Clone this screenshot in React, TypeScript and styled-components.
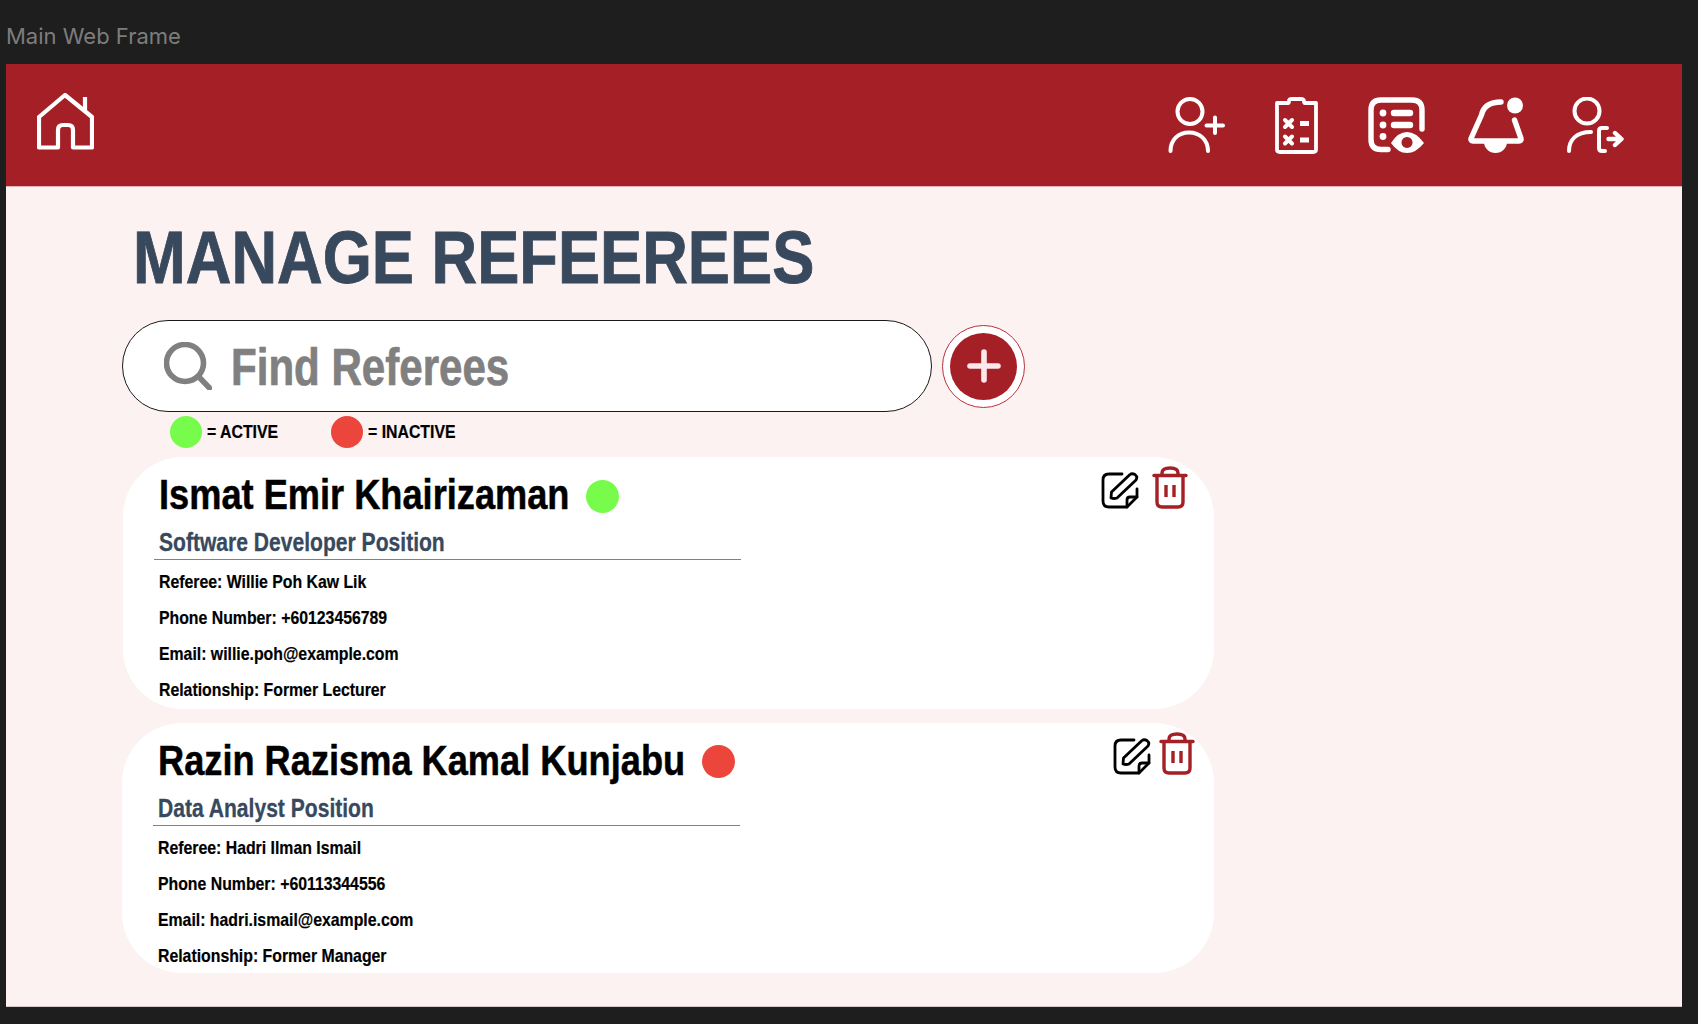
import React from "react";
import styled, { createGlobalStyle, css } from "styled-components";

const Global = createGlobalStyle`
  * { box-sizing: border-box; }
  html, body { margin: 0; padding: 0; background: #1e1e1e; }
  body { font-family: "Liberation Sans", Arial, sans-serif; }
`;

const narrow = (ratio: number, stroke = 0) => css`
  display: block;
  transform: scaleX(${ratio});
  transform-origin: 0 50%;
  white-space: nowrap;
  -webkit-text-stroke: ${stroke}px currentColor;
`;

const Page = styled.div`
  width: 1698px;
  height: 1024px;
  overflow: hidden;
  background: #1e1e1e;
`;
const FrameLabel = styled.div`
  height: 64px;
  padding: 23px 0 0 6px;
  font: 400 22px/26px Inter, sans-serif;
  color: #7d7d7d;
`;
const Frame = styled.div`
  width: 1676px;
  height: 943px;
  margin-left: 6px;
  background: #fdf2f2;
  border-bottom: 1px solid #d8c8c8;
`;
const Header = styled.header`
  height: 123px;
  background: #a52026;
  border-bottom: 1px solid #e3b4b6;
  display: flex;
  align-items: flex-start;
  justify-content: space-between;
  padding: 29px 58px 0 31px;
`;
const Nav = styled.nav`
  display: flex;
  padding-top: 4px;
`;
const NavSlot = styled.span<{ $left: number }>`
  display: block;
  height: 57px;
  margin-left: ${(p) => p.$left}px;
`;
const Main = styled.main`
  padding-left: 116px;
  width: 1210px;
`;
const Title = styled.h1`
  margin: 0;
  height: 133px;
  padding: 28px 0 0 13px;
  font-weight: 700;
  font-size: 74px;
  line-height: 86px;
  color: #38495d;
  ${narrow(0.854, 0.9)}
`;
const SearchRow = styled.div`
  display: flex;
  align-items: center;
  gap: 10px;
`;
const Search = styled.div`
  width: 810px;
  height: 92px;
  background: #fff;
  border: 1px solid #1a1a1a;
  border-radius: 46px;
  display: flex;
  align-items: center;
  gap: 19px;
  padding-left: 41px;
`;
const Placeholder = styled.span`
  padding-top: 3px;
  font-weight: 700;
  font-size: 51px;
  color: #808080;
  ${narrow(0.825, 0.7)}
`;
const AddButton = styled.button`
  width: 83px;
  height: 83px;
  padding: 0;
  border-radius: 50%;
  background: #fff;
  border: 1px solid #b9303c;
  display: flex;
  align-items: center;
  justify-content: center;
`;
const AddInner = styled.span`
  width: 67px;
  height: 67px;
  border-radius: 50%;
  background: #a52026;
  display: flex;
  align-items: center;
  justify-content: center;
`;
const Legend = styled.div`
  display: flex;
  align-items: center;
  height: 45px;
  padding: 0 0 5px 48px;
`;
const LegendItem = styled.div<{ $width: number }>`
  display: flex;
  align-items: center;
  gap: 5px;
  width: ${(p) => p.$width}px;
`;
const LegendText = styled.span`
  font-weight: 700;
  font-size: 18px;
  color: #000;
  ${narrow(0.88, 0.2)}
`;
const Dot = styled.span<{ $on: boolean; $size?: number; $drop?: number }>`
  flex: none;
  display: inline-block;
  width: ${(p) => p.$size ?? 32}px;
  height: ${(p) => p.$size ?? 32}px;
  margin-top: ${(p) => p.$drop ?? 0}px;
  border-radius: 50%;
  background: ${(p) => (p.$on ? "#78fc4c" : "#ec463c")};
`;
const CardList = styled.div`
  display: flex;
  flex-direction: column;
  gap: 14px;
`;
const Card = styled.article<{ $height: number; $inset: number }>`
  width: ${(p) => 1092 - p.$inset}px;
  height: ${(p) => p.$height}px;
  margin-left: ${(p) => p.$inset}px;
  background: #fff;
  border-radius: 60px;
  display: flex;
  justify-content: space-between;
  padding-left: 36px;
`;
const CardBody = styled.div`
  width: 582px;
  padding-top: 13px;
`;
const NameRow = styled.div`
  display: flex;
  align-items: center;
  gap: 17px;
  height: 48px;
`;
const Name = styled.h2<{ $width: number }>`
  margin: 0;
  width: ${(p) => p.$width}px;
  font-weight: 700;
  font-size: 43px;
  line-height: 48px;
  color: #000;
  ${narrow(0.842, 0.5)}
`;
const Position = styled.div`
  margin-left: -5px;
  padding: 10px 0 3px 5px;
  height: 42px;
  border-bottom: 1px solid #c9616f;
`;
const PositionText = styled.h3`
  margin: 0;
  font-weight: 700;
  font-size: 25px;
  line-height: 28px;
  color: #38495d;
  ${narrow(0.843, 0.3)}
`;
const Details = styled.div`
  padding-top: 4px;
`;
const Detail = styled.p`
  margin: 0;
  height: 36px;
  font-weight: 700;
  font-size: 18.5px;
  line-height: 36px;
  color: #000;
  ${narrow(0.855, 0.2)}
`;
const Actions = styled.div<{ $gap: number; $right: number }>`
  display: flex;
  align-items: flex-end;
  align-self: flex-start;
  gap: ${(p) => p.$gap}px;
  padding: 9px ${(p) => p.$right}px 0 0;
`;

const w = { fill: "none", stroke: "#fff", strokeLinecap: "round", strokeLinejoin: "round" } as const;

const HomeIcon = () => (
  <svg width="57" height="57" viewBox="0 0 57 57" {...w} strokeWidth="4.2" strokeLinecap="butt" strokeLinejoin="miter">
    <path d="M2 54.500H21V37q0-5 5-5h5q5 0 5 5V54.500H55V24L28 2 2 24Z" strokeLinejoin="round" />
    <path d="M48 4V18" />
  </svg>
);
const UserPlusIcon = () => (
  <svg width="57" height="57" viewBox="0 0 57 57" {...w} strokeWidth="4">
    <circle cx="22" cy="14.500" r="12.500" />
    <path d="M2.500 54C2.500 43 10 35.500 21 35.500S40 43 40 54" />
    <path d="M47 20.500V36M38.500 28.500H55" />
  </svg>
);
const ClipboardIcon = () => (
  <svg width="43" height="57" viewBox="0 0 43 57" {...w} strokeWidth="3.800">
    <path d="M13 6H2v46.500q0 2.500 3 2.500h33q3 0 3-2.500V6H30q-1 0-1-2 0-2-3-2H17Q14 2 14 4q0 2-1 2Z" />
    <path d="M10 23l7 7M17 23l-7 7M10 39.500l7 7M17 39.500l-7 7" strokeWidth="4" />
    <path d="M25 26.500h9M25 43h9" strokeWidth="5" strokeLinecap="butt" />
  </svg>
);
const ListEyeIcon = () => (
  <svg width="57" height="57" viewBox="0 0 57 57">
    <g fill="none" stroke="#fff" strokeWidth="5.400" strokeLinecap="round">
      <path d="M20 52.500H13Q3 52.500 3 42.500V13Q3 3 13 3H44Q54 3 54 13V32" />
      <path d="M26 16H42M26 28H42" strokeWidth="6.400" />
    </g>
    <g fill="#fff">
      <circle cx="15" cy="16" r="3.400" />
      <circle cx="15" cy="28" r="3.400" />
      <circle cx="15" cy="39.500" r="3.400" />
      <path fillRule="evenodd" d="M23 46Q30 35 39 35T56 46Q48 56 39 56T23 46ZM39 40a5.500 5.500 0 1 0 .01 0Z" />
    </g>
  </svg>
);
const BellIcon = () => (
  <svg width="57" height="57" viewBox="0 0 57 57">
    <path
      d="M33 5C22 5 15.500 9 13.500 18L3 41.500Q2.500 44 5 44H51Q53.500 44 53 41.500L46.500 23"
      fill="none"
      stroke="#fff"
      strokeWidth="5.400"
      strokeLinecap="round"
      strokeLinejoin="round"
    />
    <circle cx="47" cy="8.500" r="8" fill="#fff" />
    <path d="M16 45a11.500 11 0 0 0 23 0Z" fill="#fff" />
  </svg>
);
const UserExitIcon = () => (
  <svg width="57" height="57" viewBox="0 0 57 57" {...w} strokeWidth="4">
    <circle cx="20" cy="14" r="12.500" />
    <path d="M2 54C2 43 9 35 24 35" />
    <path d="M40 31H35Q32 31 32 34V51Q32 54 35 54H38" />
    <path d="M41.500 42H54M48 36L54.500 42L48 48" strokeWidth="4.400" />
  </svg>
);
const SearchIcon = () => (
  <svg width="48" height="48" viewBox="0 0 48 48" fill="none" stroke="#808080" strokeWidth="5.600" strokeLinecap="round">
    <circle cx="21" cy="21" r="18.500" />
    <path d="M34.500 34.500L45.500 46" />
  </svg>
);
const PlusIcon = () => (
  <svg width="34" height="34" viewBox="0 0 34 34" fill="none" stroke="#fae8ea" strokeWidth="5.600" strokeLinecap="round">
    <path d="M17 3V31M3 17H31" />
  </svg>
);
const EditIcon = () => (
  <svg width="38" height="37" viewBox="0 0 38 37" fill="none" stroke="#000" strokeWidth="2.800" strokeLinecap="round" strokeLinejoin="round">
    <path d="M21 2H8Q2 2 2 8V29Q2 35 8 35H26L36 25V17" />
    <path d="M26 35V28Q26 25 29 25H36" />
    <path d="M10 26L10.500 20L29 2.500Q31 1 34 2.500Q37 5 35 8L16 26Q13 27 10 26Z" />
  </svg>
);
const TrashIcon = () => (
  <svg width="36" height="43" viewBox="0 0 36 43" fill="none" stroke="#a52026" strokeWidth="3.400" strokeLinecap="round" strokeLinejoin="round">
    <path d="M2 9.500H34" />
    <path d="M10 9V7Q10 2 18 2T26 7V9" />
    <path d="M5 10V36Q5 41 10 41H26Q31 41 31 36V10" />
    <path d="M14 19V31M22 19V31" strokeLinecap="butt" />
  </svg>
);

type Referee = {
  name: string;
  nameWidth: number;
  position: string;
  referee: string;
  phone: string;
  email: string;
  relationship: string;
  active: boolean;
  height: number;
  inset: number;
  dotDrop: number;
  gap: number;
  right: number;
};

const referees: Referee[] = [
  {
    name: "Ismat Emir Khairizaman",
    nameWidth: 410,
    position: "Software Developer Position",
    referee: "Willie Poh Kaw Lik",
    phone: "+60123456789",
    email: "willie.poh@example.com",
    relationship: "Former Lecturer",
    active: true,
    height: 252,
    inset: 1,
    dotDrop: 4,
    gap: 13,
    right: 26,
  },
  {
    name: "Razin Razisma Kamal Kunjabu",
    nameWidth: 527,
    position: "Data Analyst Position",
    referee: "Hadri Ilman Ismail",
    phone: "+60113344556",
    email: "hadri.ismail@example.com",
    relationship: "Former Manager",
    active: false,
    height: 250,
    inset: 0,
    dotDrop: 2,
    gap: 8,
    right: 19,
  },
];

export default function App() {
  return (
    <Page>
      <Global />
      <FrameLabel>Main Web Frame</FrameLabel>
      <Frame>
        <Header>
          <HomeIcon />
          <Nav>
            <NavSlot $left={0}>
              <UserPlusIcon />
            </NavSlot>
            <NavSlot $left={50}>
              <ClipboardIcon />
            </NavSlot>
            <NavSlot $left={50}>
              <ListEyeIcon />
            </NavSlot>
            <NavSlot $left={43}>
              <BellIcon />
            </NavSlot>
            <NavSlot $left={42}>
              <UserExitIcon />
            </NavSlot>
          </Nav>
        </Header>
        <Main>
          <Title>MANAGE REFEEREES</Title>
          <SearchRow>
            <Search>
              <SearchIcon />
              <Placeholder>Find Referees</Placeholder>
            </Search>
            <AddButton aria-label="Add referee">
              <AddInner>
                <PlusIcon />
              </AddInner>
            </AddButton>
          </SearchRow>
          <Legend>
            <LegendItem $width={161}>
              <Dot $on />
              <LegendText>= ACTIVE</LegendText>
            </LegendItem>
            <LegendItem $width={130}>
              <Dot $on={false} />
              <LegendText>= INACTIVE</LegendText>
            </LegendItem>
          </Legend>
          <CardList>
            {referees.map((r) => (
              <Card key={r.name} $height={r.height} $inset={r.inset}>
                <CardBody>
                  <NameRow>
                    <Name $width={r.nameWidth}>{r.name}</Name>
                    <Dot $on={r.active} $size={33} $drop={r.dotDrop} />
                  </NameRow>
                  <Position>
                    <PositionText>{r.position}</PositionText>
                  </Position>
                  <Details>
                    <Detail>Referee: {r.referee}</Detail>
                    <Detail>Phone Number: {r.phone}</Detail>
                    <Detail>Email: {r.email}</Detail>
                    <Detail>Relationship: {r.relationship}</Detail>
                  </Details>
                </CardBody>
                <Actions $gap={r.gap} $right={r.right}>
                  <EditIcon />
                  <TrashIcon />
                </Actions>
              </Card>
            ))}
          </CardList>
        </Main>
      </Frame>
    </Page>
  );
}
